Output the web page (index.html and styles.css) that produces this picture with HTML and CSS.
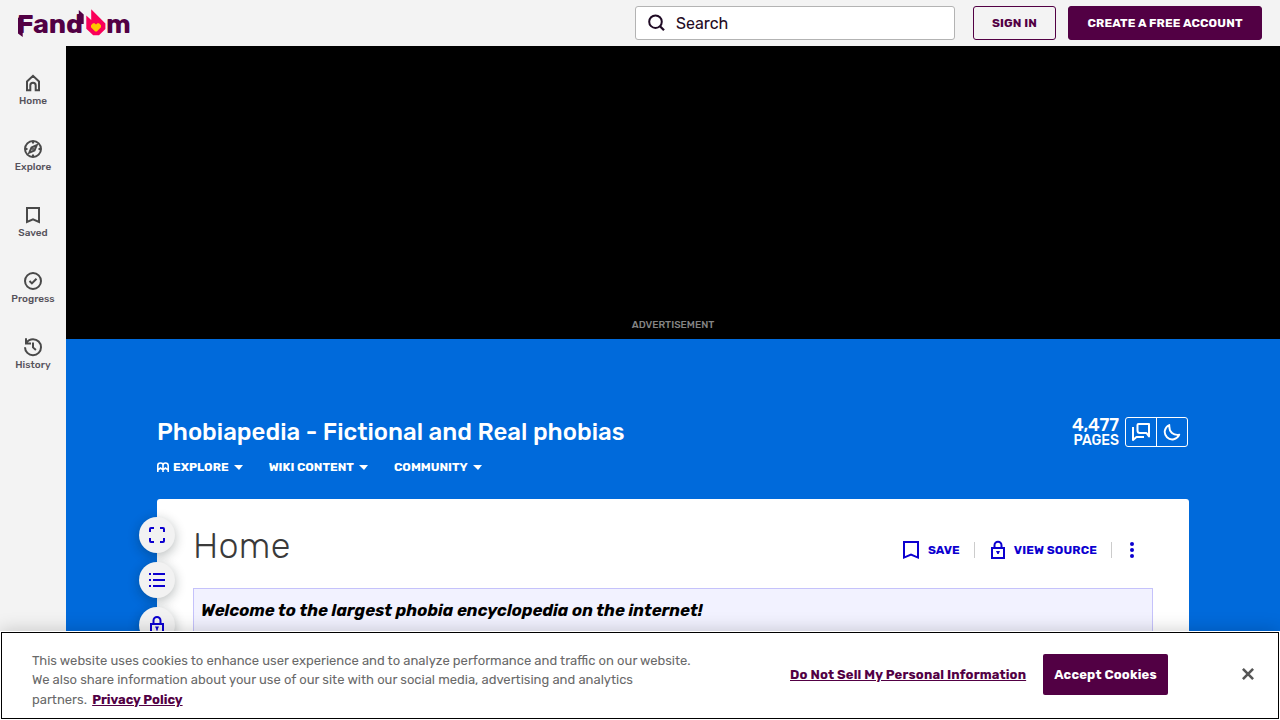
FILE: index.html
```html
<!DOCTYPE html>
<html lang="en">
<head>
<meta charset="utf-8">
<title>Phobiapedia - Fictional and Real phobias</title>
<link rel="stylesheet" href="styles.css">
</head>
<body>
<header class="topbar">
  <a class="logo" aria-label="Fandom">
    <span class="logo-text logo-start">Fand</span>
    <svg class="logo-flame" width="20" height="27" viewBox="0 0 20 27"><path fill="#fa005a" d="M.3 6.500 5.200 11V.3L19.400 14.600V20L13 26.200H7.200L.3 19.800z"/><path fill="#ffc500" d="M5 16.200 7 14.200h1.600L10 15.500l1.400-1.300H13l2 2v2L10.800 22.400H9.200L5 18.200z"/></svg>
    <span class="logo-text logo-end">m</span>
    <svg class="logo-tips" width="72" height="30" viewBox="0 0 72 30"><path fill="#520044" d="M0 10.200 2 8h2.700v21L0 25.400zM60.800 2l4.900 4.500V16h-4.900z"/></svg>
  </a>
  <div class="search">
    <svg width="18" height="18" viewBox="0 0 18 18" fill="none" stroke="#1f0a24" stroke-width="2"><circle cx="7.500" cy="7.700" r="6.300"/><path d="m12 12.200 4 4" stroke-width="2.300"/></svg>
    <span>Search</span>
  </div>
  <a class="button button-outline">SIGN IN</a>
  <a class="button button-solid">CREATE A FREE ACCOUNT</a>
</header>
<div class="shell">
  <nav class="sidebar">
    <a class="nav-item"><svg class="nav-icon" viewBox="0 0 18 18"><path d="M3 16.200V7.400L9 1.800l6 5.600v8.800h-3.300v-4.700a2.700 2.700 0 0 0-5.400 0v4.700z"/></svg><span>Home</span></a>
    <a class="nav-item"><svg class="nav-icon" viewBox="0 0 18 18"><circle cx="9" cy="9" r="8"/><path d="M9 1v2.500M9 14.500V17M1 9h2.500M14.500 9H17M12.700 5.300 7.500 7.400l-2.200 5.300 5.200-2.100z"/><circle cx="9" cy="9" r=".5"/></svg><span>Explore</span></a>
    <a class="nav-item"><svg class="nav-icon" viewBox="0 0 18 18"><path d="M3 2h12v14l-6-2.700L3 16z"/></svg><span>Saved</span></a>
    <a class="nav-item"><svg class="nav-icon" viewBox="0 0 18 18"><circle cx="9" cy="9" r="8"/><path d="m5.500 9 2.400 2.400 4.600-4.600"/></svg><span>Progress</span></a>
    <a class="nav-item"><svg class="nav-icon" viewBox="0 0 18 18"><path d="M1 9.200a8 8 0 1 0 8-8C6 1.200 3.800 2.700 2.300 4.800M2 .2v5.200h5M9 4.400v5l2.900 2.500"/></svg><span>History</span></a>
  </nav>
  <main class="main">
    <section class="ad"><span>ADVERTISEMENT</span></section>
    <section class="community">
      <div class="community-row">
        <h1 class="wiki-name">Phobiapedia - Fictional and Real phobias</h1>
        <div class="counter"><strong>4,477</strong><span>PAGES</span></div>
        <div class="tools">
          <a><svg width="20" height="20" viewBox="0 0 20 20" fill="none" stroke="#fff" stroke-width="2" stroke-linejoin="round"><path d="M7.500 2H18v12.500L15.500 11H9Q6.500 11 6.500 8.500V3q0-1 1-1z"/><path d="M2 5v13l3.500-3H13"/></svg></a>
          <a><svg width="18" height="18" viewBox="0 0 18 18" fill="none" stroke="#fff" stroke-width="1.900" stroke-linejoin="round"><path d="M6.300 2A7.500 7.500 0 1 0 16.200 11.700Q12 12.500 9 10T6.300 2z"/></svg></a>
        </div>
      </div>
      <nav class="menu">
        <a><svg width="12" height="11" viewBox="0 0 12 11" fill="none" stroke="#fff" stroke-width="1.600"><path d="M.8 10V3.500Q.8 1 3.500 1T6 3.500V10M6 3.500Q6 1 8.500 1t2.700 2.500V10M1 7.800 3.500 6 6 7.800 8.500 6 11 7.800"/></svg><span>EXPLORE</span><i class="caret"></i></a>
        <a><span>WIKI CONTENT</span><i class="caret"></i></a>
        <a><span>COMMUNITY</span><i class="caret"></i></a>
      </nav>
    </section>
    <article class="page">
      <div class="rail">
        <a><svg width="18" height="18" viewBox="0 0 18 18"><path d="M2 6V3q0-1 1-1h3M12 2h3q1 0 1 1v3M16 12v3q0 1-1 1h-3M6 16H3q-1 0-1-1v-3"/></svg></a>
        <a><svg width="18" height="18" viewBox="0 0 18 18"><path d="M1 3h2M5 3h12M1 9h2M5 9h12M1 15h2M5 15h12"/></svg></a>
        <a><svg width="18" height="18" viewBox="0 0 18 18"><path d="M3 8h12v9H3zM5.500 8V4.500a3.500 3.500 0 0 1 7 0V8"/><path class="filled" d="M7 10.500h4L9.800 13v1.500H8.200V13z"/></svg></a>
      </div>
      <div class="page-head">
        <h2 class="page-title">Home</h2>
        <div class="actions">
          <a class="save"><svg width="18" height="20" viewBox="0 0 18 20"><path d="M2 2h14v15.600l-7-3-7 3z"/></svg><span>SAVE</span></a>
          <a class="source"><svg width="16" height="20" viewBox="0 0 16 20"><path d="M2 8h12v10H2zM4.500 8V5.300a3.500 3.500 0 0 1 7 0V8"/><path class="filled" d="M6 11h4l-1.200 2.500V14H7.200v-.5z"/></svg><span>VIEW SOURCE</span></a>
          <a class="more"><i></i><i></i><i></i></a>
        </div>
      </div>
      <div class="welcome">Welcome to the largest phobia encyclopedia on the internet!</div>
    </article>
  </main>
</div>
<aside class="cookies">
  <div class="cookie-box">
    <p class="cookie-text"><span>This website uses cookies to enhance user experience and to analyze performance and traffic on our website.</span><span>We also share information about your use of our site with our social media, advertising and analytics</span><span>partners. <a>Privacy Policy</a></span></p>
    <a class="opt-out">Do Not Sell My Personal Information</a>
    <a class="accept">Accept Cookies</a>
    <svg class="close" width="12" height="12" viewBox="0 0 12 12"><path d="m.9.9 10.200 10.200M11.100.9.9 11.100" stroke="#565656" stroke-width="2.600"/></svg>
  </div>
</aside>
</body>
</html>
```
FILE: styles.css
```css
* { box-sizing: border-box; }
body { margin: 0; height: 720px; overflow: hidden; font-family: Rubik, Roboto, sans-serif; background: #f3f3f3; color: #3a3a3a; }
h1, h2, p { margin: 0; }
a { white-space: nowrap; }
svg { display: block; flex: none; }

.topbar { display: flex; align-items: flex-start; height: 46px; padding: 6px 18px 0; background: #f3f3f3; }
.logo { position: relative; display: flex; width: 113px; height: 34px; margin-right: auto; color: #520044; }
.logo-text { font: 750 27px/36px Rubik, Roboto, sans-serif; }
.logo-start { width: 67px; margin-left: -1px; margin-right: 2px; letter-spacing: -.1px; }
.logo-flame { margin-top: 3px; }
.logo-end { width: 25px; }
.logo-tips { position: absolute; left: 0; top: 2px; }
.search { display: flex; align-items: center; width: 320px; height: 34px; padding-left: 12px; border: 1px solid #b3b3b3; border-radius: 3px; background: #fff; color: #1f0a24; font-size: 16px; }
.search span { margin-left: 10px; }
.button { display: flex; align-items: center; justify-content: center; height: 34px; border: 1px solid #520044; border-radius: 3px; font-size: 12px; font-weight: 700; letter-spacing: .13px; }
.button-outline { width: 83px; margin-left: 18px; color: #520044; }
.button-solid { width: 194px; margin-left: 12px; background: #520044; color: #fff; }

.shell { display: flex; height: 674px; }
.sidebar { width: 66px; padding-top: 11px; flex: none; }
.nav-item { display: flex; flex-direction: column; align-items: center; height: 66px; padding-top: 17px; font-size: 10px; font-weight: 500; line-height: 12px; color: #56525b; gap: 3px; }
.nav-icon { width: 18px; height: 18px; fill: none; stroke: #494949; stroke-width: 2; overflow: visible; }

.main { flex: 1; background: #006adb; }
.ad { display: flex; justify-content: center; align-items: flex-end; height: 293px; padding-bottom: 8px; background: #000; color: #848484; font-size: 10px; font-weight: 500; line-height: 12px; }
.community { width: 1032px; height: 160px; margin-left: 91px; padding: 78px 1px 0 0; color: #fff; }
.community-row { display: flex; align-items: flex-start; height: 30px; }
.wiki-name { margin-right: auto; font-size: 24px; line-height: 30px; font-weight: 500; }
.counter { display: flex; flex-direction: column; align-items: flex-end; margin-right: 6px; }
.counter strong { font-size: 18px; line-height: 16px; font-weight: 500; }
.counter span { font-size: 14px; line-height: 15px; font-weight: 500; }
.tools { display: flex; width: 63px; height: 30px; border: 1px solid #fff; border-radius: 3px; }
.tools a { display: flex; flex: 1; align-items: center; justify-content: center; }
.tools a + a { border-left: 1px solid #fff; }
.menu { display: flex; margin-top: 14px; font-size: 12px; line-height: 12px; font-weight: 700; gap: 26px; }
.menu a { display: flex; align-items: center; }
.menu svg { margin-right: 4px; }
.caret { width: 0; margin-left: 5px; border: 4.5px solid transparent; border-top: 5px solid #fff; border-bottom: 0; border-left-width: 5px; border-right-width: 4px; }

.page { position: relative; width: 1032px; height: 221px; margin-left: 91px; padding: 0 36px; border-radius: 3px 3px 0 0; background: #fff; }
.rail { position: absolute; left: -18px; top: 18px; display: flex; flex-direction: column; gap: 9px; }
.rail a { display: flex; align-items: center; justify-content: center; width: 36px; height: 36px; border-radius: 50%; background: #f2f2f2; box-shadow: 0 3px 12px rgba(14, 25, 26, .3); }
.rail path, .actions path { fill: none; stroke: #0c00d0; stroke-width: 2; }
.rail .filled, .actions .filled { fill: #0c00d0; stroke: none; }
.page-head { display: flex; height: 89px; justify-content: space-between; }
.page-title { padding-top: 25px; font-size: 36px; line-height: 44px; font-weight: 300; letter-spacing: .25px; }
.actions { display: flex; height: 20px; margin-top: 41px; align-items: center; font-size: 12px; font-weight: 700; color: #0c00d0; }
.actions a { display: flex; align-items: center; }
.save { margin-right: 14px; }
.save span { margin-left: 8px; }
.source { padding-left: 15px; padding-right: 14px; border: solid #ccc; border-width: 0 1px; }
.source svg { margin: -2px 0; }
.source span { margin-left: 8px; letter-spacing: .13px; }
.actions .more { width: 39px; margin-right: 2px; flex-direction: column; gap: 2px; }
.more i { width: 4px; height: 4px; border-radius: 50%; background: #0c00d0; }
.welcome { height: 140px; padding: 11px 7px; border: 1px solid #c5c2fb; background: #f2f2ff; color: #000; font-size: 16.8px; line-height: 21px; font-weight: 700; font-style: italic; }

.cookies { position: absolute; left: 0; bottom: 0; width: 100%; height: 89px; padding: 1px; background: #fff; box-shadow: 0 0 18px rgba(0, 0, 0, .2); }
.cookie-box { display: flex; height: 87px; border: 1px solid #000; font-size: 13px; }
.cookie-text { width: 788px; padding: 18.2px 0 0 30px; line-height: 19.3px; color: #696969; }
.cookie-text > span { display: block; white-space: nowrap; }
.cookie-text a, .opt-out { color: #520044; font-weight: 700; text-decoration: underline; }
.cookie-text a { margin-left: 2px; }
.opt-out { width: 253px; margin-top: 34px; line-height: 16px; letter-spacing: .14px; }
.accept { display: flex; align-items: center; justify-content: center; width: 125px; height: 41px; margin-top: 21px; border-radius: 2px; background: #520044; color: #fff; font-weight: 700; letter-spacing: .14px; }
.close { margin: 35px 0 0 74px; }
```
